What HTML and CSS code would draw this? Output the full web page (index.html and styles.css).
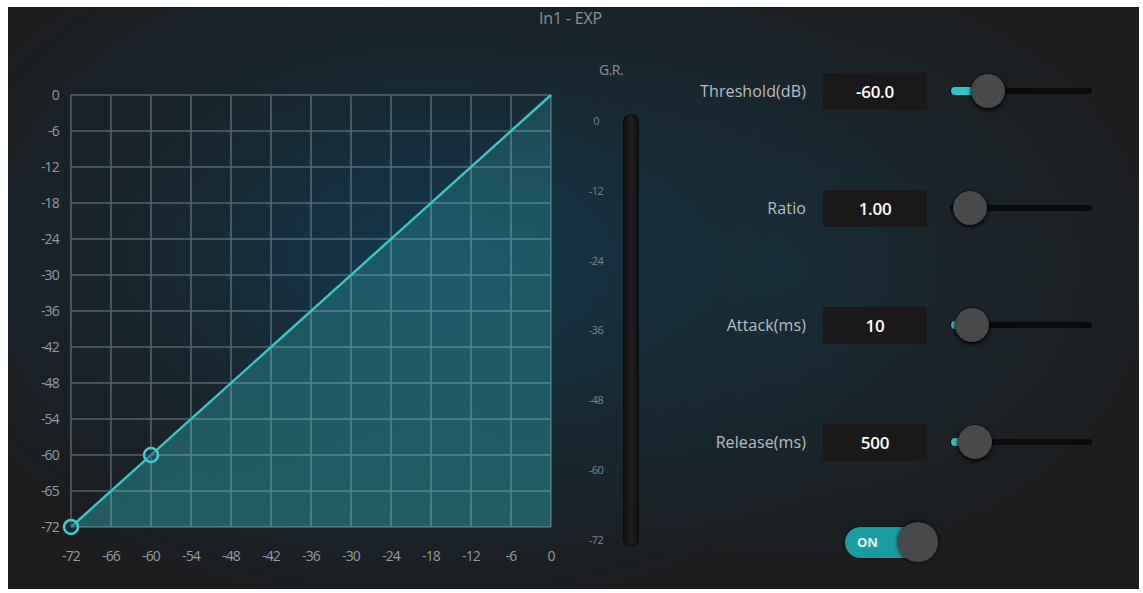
FILE: index.html
```html
<!DOCTYPE html>
<html lang="en">
<head>
    <meta charset="UTF-8">
    <meta name="viewport" content="width=device-width, initial-scale=1.0">
    <title>In1 - EXP</title>
    <link rel="stylesheet" href="styles.css">
</head>
<body>

<div class="panel">
    <!-- Title -->
    <div class="panel-title">In1 - EXP</div>

    <div class="panel-body">
        <!-- Transfer curve -->
        <svg class="graph" width="560" height="560" viewBox="0 0 560 560">
            <defs>
                <linearGradient id="area" x1="0" y1="0" x2="0" y2="1">
                    <stop offset="0" stop-color="#2a8d99" stop-opacity="0.30"/>
                    <stop offset="1" stop-color="#2a8d99" stop-opacity="0.55"/>
                </linearGradient>
            </defs>
            <polygon points="63,498 543,66 543,498" fill="url(#area)"/>
            <path class="grid-lines" d="M63 66V498M103 66V498M143 66V498M183 66V498M223 66V498M263 66V498M303 66V498M343 66V498M383 66V498M423 66V498M463 66V498M503 66V498M543 66V498
                M63 66H543M63 102H543M63 138H543M63 174H543M63 210H543M63 246H543M63 282H543M63 318H543M63 354H543M63 390H543M63 426H543M63 462H543M63 498H543"/>
            <line class="curve" x1="63" y1="498" x2="543" y2="66"/>
            <circle class="point" cx="63" cy="498" r="7"/>
            <circle class="point" cx="143" cy="426" r="7"/>

            <g class="y-labels">
                <text x="51" y="71">0</text>
                <text x="51" y="107">-6</text>
                <text x="51" y="143">-12</text>
                <text x="51" y="179">-18</text>
                <text x="51" y="215">-24</text>
                <text x="51" y="251">-30</text>
                <text x="51" y="287">-36</text>
                <text x="51" y="323">-42</text>
                <text x="51" y="359">-48</text>
                <text x="51" y="395">-54</text>
                <text x="51" y="431">-60</text>
                <text x="51" y="467">-65</text>
                <text x="51" y="503">-72</text>
            </g>
            <g class="x-labels">
                <text x="63" y="532">-72</text>
                <text x="103" y="532">-66</text>
                <text x="143" y="532">-60</text>
                <text x="183" y="532">-54</text>
                <text x="223" y="532">-48</text>
                <text x="263" y="532">-42</text>
                <text x="303" y="532">-36</text>
                <text x="343" y="532">-30</text>
                <text x="383" y="532">-24</text>
                <text x="423" y="532">-18</text>
                <text x="463" y="532">-12</text>
                <text x="503" y="532">-6</text>
                <text x="543" y="532">0</text>
            </g>
        </svg>

        <!-- Gain reduction meter -->
        <div class="meter">
            <div class="meter-title">G.R.</div>
            <div class="meter-row">
                <div class="meter-scale">
                    <span>0</span>
                    <span>-12</span>
                    <span>-24</span>
                    <span>-36</span>
                    <span>-48</span>
                    <span>-60</span>
                    <span>-72</span>
                </div>
                <div class="meter-bar"></div>
            </div>
        </div>

        <!-- Parameters -->
        <div class="controls">
            <div class="param">
                <div class="param-label">Threshold(dB)</div>
                <div class="param-value">-60.0</div>
                <div class="slider">
                    <div class="slider-fill" style="width: 26px;"></div>
                    <div class="slider-knob" style="left: 21px;"></div>
                </div>
            </div>

            <div class="param">
                <div class="param-label">Ratio</div>
                <div class="param-value">1.00</div>
                <div class="slider">
                    <div class="slider-knob" style="left: 3px;"></div>
                </div>
            </div>

            <div class="param">
                <div class="param-label">Attack(ms)</div>
                <div class="param-value">10</div>
                <div class="slider">
                    <div class="slider-fill" style="width: 8px;"></div>
                    <div class="slider-knob" style="left: 5px;"></div>
                </div>
            </div>

            <div class="param">
                <div class="param-label">Release(ms)</div>
                <div class="param-value">500</div>
                <div class="slider">
                    <div class="slider-fill" style="width: 10px;"></div>
                    <div class="slider-knob" style="left: 8px;"></div>
                </div>
            </div>

            <!-- On / Off switch -->
            <div class="switch">
                <span class="switch-text">ON</span>
                <span class="switch-knob"></span>
            </div>
        </div>
    </div>
</div>

</body>
</html>
```

FILE: styles.css
```css
/* Global Styling */
body {
    margin: 0;
    background-color: #ffffff;
    font-family: 'Open Sans', 'Noto Sans', sans-serif;
}

/* Panel */
.panel {
    width: 1131px;
    height: 582px;
    margin: 7px 0 0 8px;
    background:
        radial-gradient(ellipse 520px 360px at 420px 250px, rgba(18, 60, 84, 0.9), rgba(20, 50, 66, 0.45) 55%, rgba(28, 29, 31, 0) 100%),
        radial-gradient(ellipse 380px 300px at 780px 260px, rgba(22, 52, 66, 0.6), rgba(28, 29, 31, 0) 100%),
        #1c1d1f;
    display: flex;
    flex-direction: column;
    overflow: hidden;
}

.panel-title {
    height: 22px;
    line-height: 22px;
    text-align: center;
    font-size: 16px;
    color: #8c9294;
    letter-spacing: -0.2px;
    padding-right: 6px;
}

.panel-body {
    display: flex;
    flex: 1;
}

/* Graph */
.graph {
    display: block;
    flex-shrink: 0;
}

.grid-lines {
    fill: none;
    stroke: rgba(185, 215, 225, 0.36);
    stroke-width: 1.5;
}

.curve {
    stroke: #3cc6c8;
    stroke-width: 2.4;
}

.point {
    fill: rgba(20, 60, 70, 0.4);
    stroke: #43cfd2;
    stroke-width: 2.5;
}

.y-labels text,
.x-labels text {
    font-family: 'Open Sans', 'Noto Sans', sans-serif;
    font-size: 14px;
    fill: #949da1;
    letter-spacing: -0.8px;
}

.y-labels text {
    text-anchor: end;
}

.x-labels text {
    text-anchor: middle;
}

/* Meter */
.meter {
    width: 92px;
    flex-shrink: 0;
}

.meter-title {
    margin-top: 32px;
    padding-left: 31px;
    font-size: 14px;
    line-height: 18px;
    color: #8c9294;
    letter-spacing: -0.5px;
}

.meter-row {
    display: flex;
    margin-top: 35px;
    padding-left: 16px;
    gap: 15px;
}

.meter-scale {
    width: 24px;
    height: 433px;
    display: flex;
    flex-direction: column;
    justify-content: space-between;
    align-items: center;
    font-size: 11px;
    line-height: 14px;
    color: #7d878b;
    letter-spacing: -0.6px;
}

.meter-bar {
    width: 16px;
    height: 433px;
    border-radius: 8px;
    background: linear-gradient(90deg, #0d0e10, #231c1f 50%, #0d0e10);
    box-shadow: inset 0 0 3px rgba(0, 0, 0, 0.8);
}

/* Controls */
.controls {
    display: flex;
    flex-direction: column;
    padding-top: 42px;
}

.param {
    display: flex;
    align-items: center;
    height: 40px;
    margin-bottom: 77px;
}

.param-label {
    width: 146px;
    text-align: right;
    font-size: 16px;
    color: #b9bec0;
    letter-spacing: 0.1px;
}

.param-value {
    width: 104px;
    height: 37px;
    margin-left: 17px;
    line-height: 37px;
    text-align: center;
    background-color: #1a1818;
    color: #ffffff;
    font-size: 17px;
    font-weight: 600;
    letter-spacing: -0.3px;
}

/* Slider */
.slider {
    position: relative;
    width: 142px;
    height: 6px;
    margin-left: 23px;
    border-radius: 3px;
    background-color: #0a0a0a;
}

.slider-fill {
    position: absolute;
    left: 1px;
    top: -1px;
    height: 8px;
    border-radius: 4px;
    background-color: #31c3c6;
}

.slider-knob {
    position: absolute;
    top: -14px;
    width: 34px;
    height: 34px;
    border-radius: 50%;
    background-color: #48494b;
    box-shadow: 0 2px 4px rgba(0, 0, 0, 0.9), 0 0 2px rgba(0, 0, 0, 0.9);
}

/* Switch */
.switch {
    position: relative;
    width: 80px;
    height: 31px;
    margin: -12px 0 0 185px;
    border-radius: 16px;
    background-color: #1a9ca3;
    box-shadow: 0 0 3px rgba(0, 0, 0, 0.8);
}

.switch-text {
    position: absolute;
    left: 12px;
    top: 0;
    line-height: 31px;
    font-size: 13px;
    font-weight: 700;
    color: #e4f6f6;
}

.switch-knob {
    position: absolute;
    right: -13px;
    top: -5px;
    width: 40px;
    height: 40px;
    border-radius: 50%;
    background-color: #48494b;
    box-shadow: 0 0 4px rgba(0, 0, 0, 0.9);
}
```
